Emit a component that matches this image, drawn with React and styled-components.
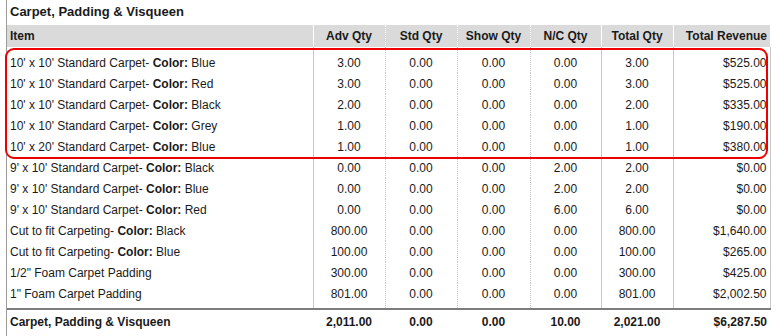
import styled, { createGlobalStyle } from 'styled-components'

const GlobalStyle = createGlobalStyle`
    body {
        margin: 0;
        background: #ffffff;
        font-family: "Liberation Sans", Arial, sans-serif;
        color: #1a1a1a;
    }
`

const Report = styled.section`
    position: relative;
    margin-left: 6px;
    width: 763px;
    border-left: 1px solid #9a9a9a;
    min-height: 336px;
`

const Title = styled.h2`
    margin: 0;
    height: 25px;
    line-height: 24px;
    padding-left: 3px;
    font-size: 13px;
    font-weight: bold;
    color: #1a1a1a;
`

const Table = styled.table`
    width: 763px;
    table-layout: fixed;
    border-collapse: collapse;
    font-size: 12px;
`

const HeadCell = styled.th`
    height: 22px;
    padding: 0 ${p => (p.$align === 'right' ? '3px' : '0')} 0 ${p => (p.$align === 'left' ? '3px' : '0')};
    background: #dadada;
    font-weight: bold;
    text-align: ${p => p.$align};
    border-right: 1px ${p => p.$line} #ffffff;
    &:last-child { border-right: none; }
`

const Row = styled.tr`
    height: 21px;
    &:first-child td {
        height: 21px;
        padding-top: 5px;
    }
    &:nth-last-child(2) td {
        height: 21px;
        padding-bottom: 4px;
    }
`

const Cell = styled.td`
    padding: 0 ${p => (p.$align === 'right' ? '3px' : '0')} 0 ${p => (p.$align === 'left' ? '3px' : '0')};
    text-align: ${p => p.$align};
    white-space: nowrap;
    border-right: 1px ${p => p.$line} #c8c8c8;
`

const TotalRow = styled.tr`
    height: 24px;
    border-top: 2px solid #7d7d7d;
`

const TotalCell = styled.td`
    padding: 0 ${p => (p.$align === 'right' ? '3px' : '0')} 0 ${p => (p.$align === 'left' ? '3px' : '0')};
    text-align: ${p => p.$align};
    font-weight: bold;
    white-space: nowrap;
`

const Highlight = styled.div`
    position: absolute;
    left: -2px;
    top: 48px;
    width: 759px;
    height: 107px;
    border: 2px solid #ee0000;
    border-radius: 9px;
    pointer-events: none;
`

const columns = [
    { label: 'Item', width: 306, align: 'left', line: 'solid' },
    { label: 'Adv Qty', width: 72, align: 'center', line: 'dotted' },
    { label: 'Std Qty', width: 72, align: 'center', line: 'dotted' },
    { label: 'Show Qty', width: 73, align: 'center', line: 'dotted' },
    { label: 'N/C Qty', width: 71, align: 'center', line: 'solid' },
    { label: 'Total Qty', width: 72, align: 'center', line: 'solid' },
    { label: 'Total Revenue', width: 97, align: 'right', line: 'solid' },
]

const rows = [
    ["10' x 10' Standard Carpet- ", 'Blue', '3.00', '0.00', '0.00', '0.00', '3.00', '$525.00'],
    ["10' x 10' Standard Carpet- ", 'Red', '3.00', '0.00', '0.00', '0.00', '3.00', '$525.00'],
    ["10' x 10' Standard Carpet- ", 'Black', '2.00', '0.00', '0.00', '0.00', '2.00', '$335.00'],
    ["10' x 10' Standard Carpet- ", 'Grey', '1.00', '0.00', '0.00', '0.00', '1.00', '$190.00'],
    ["10' x 20' Standard Carpet- ", 'Blue', '1.00', '0.00', '0.00', '0.00', '1.00', '$380.00'],
    ["9' x 10' Standard Carpet- ", 'Black', '0.00', '0.00', '0.00', '2.00', '2.00', '$0.00'],
    ["9' x 10' Standard Carpet- ", 'Blue', '0.00', '0.00', '0.00', '2.00', '2.00', '$0.00'],
    ["9' x 10' Standard Carpet- ", 'Red', '0.00', '0.00', '0.00', '6.00', '6.00', '$0.00'],
    ['Cut to fit Carpeting- ', 'Black', '800.00', '0.00', '0.00', '0.00', '800.00', '$1,640.00'],
    ['Cut to fit Carpeting- ', 'Blue', '100.00', '0.00', '0.00', '0.00', '100.00', '$265.00'],
    ['1/2" Foam Carpet Padding', null, '300.00', '0.00', '0.00', '0.00', '300.00', '$425.00'],
    ['1" Foam Carpet Padding', null, '801.00', '0.00', '0.00', '0.00', '801.00', '$2,002.50'],
]

const totals = ['Carpet, Padding & Visqueen', '2,011.00', '0.00', '0.00', '10.00', '2,021.00', '$6,287.50']

export default function App() {
    return (
        <>
            <GlobalStyle />
            <Report>
                <Title>Carpet, Padding &amp; Visqueen</Title>
                <Table>
                    <colgroup>
                        {columns.map(c => <col key={c.label} style={{ width: c.width }} />)}
                    </colgroup>
                    <thead>
                        <tr>
                            {columns.map(c => (
                                <HeadCell key={c.label} $align={c.align} $line={c.line}>{c.label}</HeadCell>
                            ))}
                        </tr>
                    </thead>
                    <tbody>
                        {rows.map(([name, color, ...nums], i) => (
                            <Row key={i}>
                                <Cell $align="left" $line="solid">
                                    {name}
                                    {color && <><b>Color:</b> {color}</>}
                                </Cell>
                                {nums.map((n, j) => (
                                    <Cell key={j} $align={columns[j + 1].align} $line={columns[j + 1].line}>{n}</Cell>
                                ))}
                            </Row>
                        ))}
                        <TotalRow>
                            {totals.map((t, j) => (
                                <TotalCell key={j} $align={columns[j].align}>{t}</TotalCell>
                            ))}
                        </TotalRow>
                    </tbody>
                </Table>
                <Highlight />
            </Report>
        </>
    )
}
